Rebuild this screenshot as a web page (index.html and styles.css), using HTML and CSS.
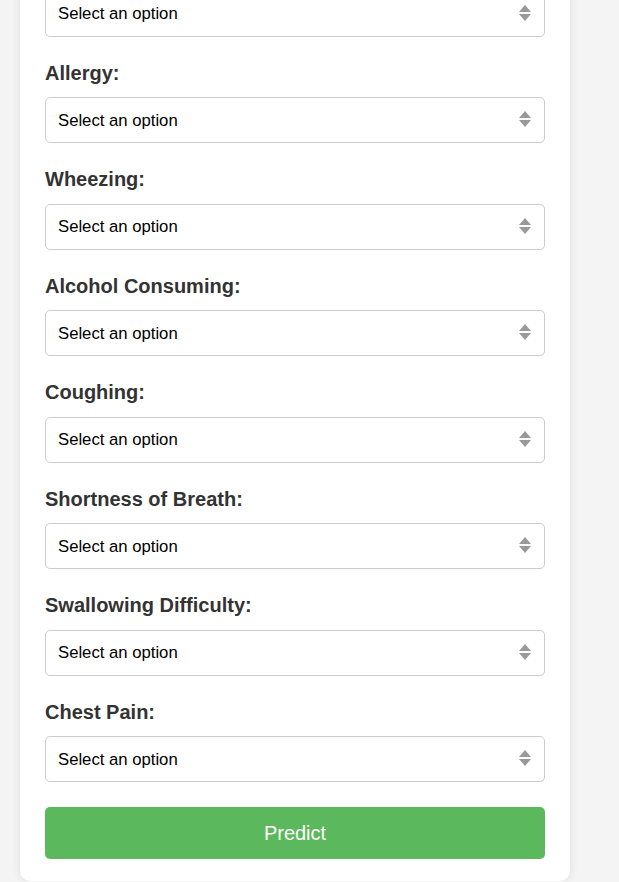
FILE: index.html
```html
<!DOCTYPE html>
<html lang="en">
<head>
<meta charset="utf-8">
<title>Prediction Form</title>
<link rel="stylesheet" href="styles.css">
</head>
<body>
<div class="card">
  <form class="form">
    <div class="field first">
      <div class="select-wrap">
        <select class="select"><option>Select an option</option><option>Yes</option><option>No</option></select>
        <svg class="arrows" width="12" height="16" viewBox="0 0 12 16"><polygon points="0,7 6,0 12,7"/><polygon points="0,9 12,9 6,16"/></svg>
      </div>
    </div>
    <div class="field">
      <label class="label">Allergy:</label>
      <div class="select-wrap">
        <select class="select"><option>Select an option</option><option>Yes</option><option>No</option></select>
        <svg class="arrows" width="12" height="16" viewBox="0 0 12 16"><polygon points="0,7 6,0 12,7"/><polygon points="0,9 12,9 6,16"/></svg>
      </div>
    </div>
    <div class="field">
      <label class="label">Wheezing:</label>
      <div class="select-wrap">
        <select class="select"><option>Select an option</option><option>Yes</option><option>No</option></select>
        <svg class="arrows" width="12" height="16" viewBox="0 0 12 16"><polygon points="0,7 6,0 12,7"/><polygon points="0,9 12,9 6,16"/></svg>
      </div>
    </div>
    <div class="field">
      <label class="label">Alcohol Consuming:</label>
      <div class="select-wrap">
        <select class="select"><option>Select an option</option><option>Yes</option><option>No</option></select>
        <svg class="arrows" width="12" height="16" viewBox="0 0 12 16"><polygon points="0,7 6,0 12,7"/><polygon points="0,9 12,9 6,16"/></svg>
      </div>
    </div>
    <div class="field">
      <label class="label">Coughing:</label>
      <div class="select-wrap">
        <select class="select"><option>Select an option</option><option>Yes</option><option>No</option></select>
        <svg class="arrows" width="12" height="16" viewBox="0 0 12 16"><polygon points="0,7 6,0 12,7"/><polygon points="0,9 12,9 6,16"/></svg>
      </div>
    </div>
    <div class="field">
      <label class="label">Shortness of Breath:</label>
      <div class="select-wrap">
        <select class="select"><option>Select an option</option><option>Yes</option><option>No</option></select>
        <svg class="arrows" width="12" height="16" viewBox="0 0 12 16"><polygon points="0,7 6,0 12,7"/><polygon points="0,9 12,9 6,16"/></svg>
      </div>
    </div>
    <div class="field">
      <label class="label">Swallowing Difficulty:</label>
      <div class="select-wrap">
        <select class="select"><option>Select an option</option><option>Yes</option><option>No</option></select>
        <svg class="arrows" width="12" height="16" viewBox="0 0 12 16"><polygon points="0,7 6,0 12,7"/><polygon points="0,9 12,9 6,16"/></svg>
      </div>
    </div>
    <div class="field">
      <label class="label">Chest Pain:</label>
      <div class="select-wrap">
        <select class="select"><option>Select an option</option><option>Yes</option><option>No</option></select>
        <svg class="arrows" width="12" height="16" viewBox="0 0 12 16"><polygon points="0,7 6,0 12,7"/><polygon points="0,9 12,9 6,16"/></svg>
      </div>
    </div>
    <button type="button" class="button">Predict</button>
  </form>
</div>
</body>
</html>
```
FILE: styles.css
```css
html, body {
  margin: 0;
  padding: 0;
  background: #f4f4f4;
  font-family: "Liberation Sans", Arial, sans-serif;
  overflow: hidden;
}
body {
  padding-left: 20px;
}
.card {
  width: 550px;
  box-sizing: border-box;
  margin-top: -9.5px;
  padding: 0 25px 22px;
  background: #fff;
  border-radius: 0 0 10px 10px;
  box-shadow: 0 0 10px rgba(0, 0, 0, 0.1);
}
.form {
  display: flex;
  flex-direction: column;
}
.field {
  display: flex;
  flex-direction: column;
  margin-top: 26px;
}
.field.first {
  margin-top: 0;
}
.label {
  display: block;
  font-size: 20px;
  font-weight: bold;
  line-height: 20.5px;
  color: #333;
  margin-bottom: 14px;
}
.select-wrap {
  position: relative;
}
.select {
  appearance: none;
  -webkit-appearance: none;
  display: block;
  width: 100%;
  height: 46px;
  box-sizing: border-box;
  margin: 0;
  padding: 0 40px 0 12px;
  border: 1px solid #ccc;
  border-radius: 5px;
  background: #fff;
  font-family: "Liberation Sans", Arial, sans-serif;
  font-size: 16.7px;
  color: #000;
}
.arrows {
  position: absolute;
  right: 14px;
  top: 14px;
  fill: #999;
  pointer-events: none;
}
.button {
  margin-top: 25px;
  height: 52px;
  width: 100%;
  border: none;
  border-radius: 5px;
  background: #5cb85c;
  color: #fff;
  font-family: "Liberation Sans", Arial, sans-serif;
  font-size: 20px;
  cursor: pointer;
}
```
